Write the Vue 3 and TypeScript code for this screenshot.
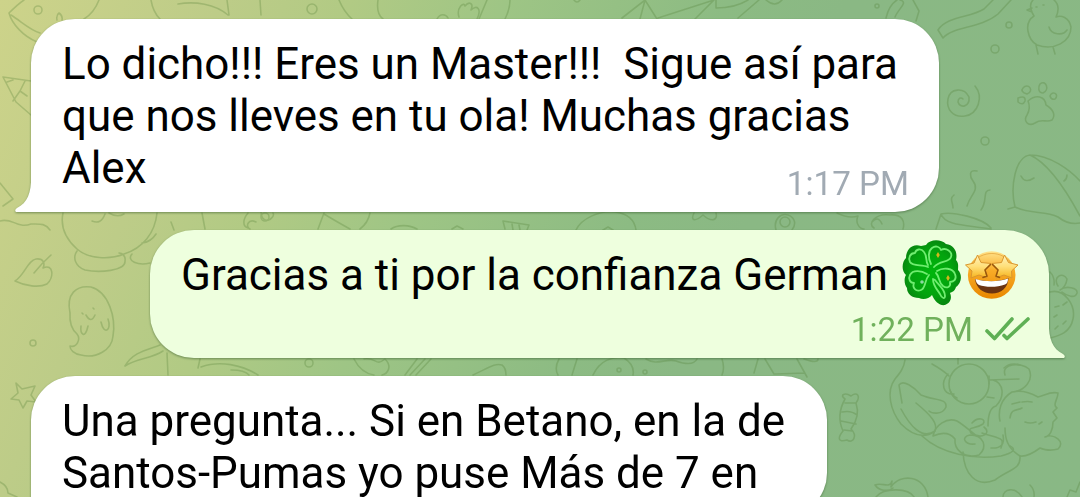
<template>
  <main class="chat">
    <svg class="chat-pattern" viewBox="0 0 1080 497" aria-hidden="true">
      <path v-for="(d, i) in doodles" :key="i" :d="d" />
      <circle v-for="([cx, cy, r], i) in dots" :key="`dot-${i}`" :cx="cx" :cy="cy" :r="r" />
    </svg>

    <article
      v-for="message in messages"
      :key="message.id"
      class="bubble"
      :class="[message.own ? 'bubble-out' : 'bubble-in', { 'bubble-stacked': message.own }]"
      :style="{ width: `${message.width}px` }"
    >
      <div class="bubble-text">
        <div v-for="line in message.lines" :key="line" class="bubble-line">
          <span>{{ line }}</span>
          <template v-if="message.own">
            <svg class="emoji-clover" viewBox="0 0 60 66" aria-hidden="true">
              <defs>
                <radialGradient id="clover">
                  <stop offset="0" stop-color="#00b60c" />
                  <stop offset=".7" stop-color="#03a30e" />
                  <stop offset="1" stop-color="#078a10" />
                </radialGradient>
              </defs>
              <path
                fill="url(#clover)"
                d="M24 5C28-1 39-1 44 4C52 5 56 12 54 20C57 23 56 27 56 30C61 35 59 44 54 47C53 51 50 52 48 53C50 57 49 63 43 65C38 66 33 62 30 55C27 59 21 60 17 58C10 58 5 54 5 48C2 44 2 38 4 35C-1 30 0 22 4 18C4 9 11 3 19 6Z"
              />
              <path
                class="clover-line"
                d="M26 25C23 21 26 17 22 12C19 8 14 9 13 13C8 13 6 18 8 22C11 27 20 24 26 27M29 24C26 18 26 11 30 8C34 5 38 7 39 10C44 7 51 12 49 17C47 23 38 20 32 27M25 34C20 31 11 29 8 35C6 39 8 43 12 43C10 48 14 52 19 50C24 48 22 41 27 35M35 31C41 27 51 28 53 34C55 39 52 42 48 42C49 47 45 49 41 46C36 42 38 37 34 33M31 39C31 46 35 49 38 54C40 59 43 59 43 56C43 49 38 47 33 40Z"
              />
              <path fill="#d5b51b" d="M36 12l1.800 3L36 18l-1.800-3ZM46 35l1.800 3L46 41l-1.800-3Z" />
              <circle cx="20" cy="42" r="1.8" fill="#8bd9a0" />
            </svg>
            <svg class="emoji-star" viewBox="0 0 54 50" aria-hidden="true">
              <defs>
                <linearGradient id="face" x1="0" y1="0" x2="0" y2="1">
                  <stop offset="0" stop-color="#ffe38c" />
                  <stop offset=".4" stop-color="#f9ac27" />
                  <stop offset="1" stop-color="#e88700" />
                </linearGradient>
                <linearGradient id="eye" x1="0" y1="0" x2="0" y2="1">
                  <stop offset="0" stop-color="#fff3bd" />
                  <stop offset=".5" stop-color="#ffdf79" />
                  <stop offset="1" stop-color="#f7b41e" />
                </linearGradient>
              </defs>
              <circle cx="26.700" cy="25" r="23.800" fill="url(#face)" />
              <path fill="none" stroke="#d58a1b" d="M6 14C17 0 37 0 47 14" opacity=".5" />
              <path
                class="eye-star"
                d="M12.500 5L16 12.500L26 13.500L20 20L22 28L14 25L6 28L7 21L0.500 15L9 13Z"
              />
              <path
                class="eye-star"
                d="M39.500 5L43.500 12.500L53 15L46.500 21L47 28L39 25L31 28L33 20L27 13.500L36.500 12.500Z"
              />
              <path fill="none" stroke="#99570c" stroke-width="1.500" stroke-linecap="round" d="M18 27.500L22 26L20 20L25.500 14.500M34.500 27.500L31 26L33 20L27.500 14.500" />
              <path fill="#6b3412" d="M10 29C20 32 34 32 43.500 28C43 38 36 43.500 27 43.500C18 43.500 11 38 10 29Z" />
              <path fill="#fff" d="M10.500 29C20 32 34 32 43 28.500C43 32 42 33.500 40 34.500C32 37.500 21 37.500 14 35C12 34 11 32 10.500 29Z" />
            </svg>
          </template>
        </div>
      </div>

      <div v-if="message.time" class="bubble-meta">
        <time>{{ message.time }}</time>
        <svg v-if="message.own" class="ticks" viewBox="0 0 46 26" aria-hidden="true">
          <path d="M3 15L10.500 22.500L28 3M20 19.500L23 22.500L44 3" />
        </svg>
      </div>

      <svg v-if="message.hasTail" class="tail" viewBox="0 0 46 42" aria-hidden="true">
        <path d="M16 0C17 20 14 32 2 38Q-1 40 1 42H46V0Z" />
      </svg>
    </article>
  </main>
</template>

<script setup lang="ts">
interface Message {
  id: number
  own: boolean
  width: number
  hasTail: boolean
  time?: string
  lines: string[]
}

const messages: Message[] = [
  {
    id: 1,
    own: false,
    width: 908,
    hasTail: true,
    time: '1:17 PM',
    lines: [
      'Lo dicho!!! Eres un Master!!!  Sigue así para',
      'que nos lleves en tu ola! Muchas gracias',
      'Alex'
    ]
  },
  {
    id: 2,
    own: true,
    width: 899,
    hasTail: true,
    time: '1:22 PM',
    lines: ['Gracias a ti por la confianza German']
  },
  {
    id: 3,
    own: false,
    width: 796,
    hasTail: false,
    lines: [
      'Una pregunta... Si en Betano, en la de',
      'Santos-Pumas yo puse Más de 7 en'
    ]
  }
]

// Outline drawings of the wallpaper
const doodles: string[] = [
  // fish and pencil
  'M24 0C18 4 13 9 9 13C12 24 23 36 37 42M11 15C22 22 30 30 40 33M99 0Q94 13 84 19M57 20Q56 15 59 13Q63 16 62 20',
  'M3 77L16 102L31 115M3 77L31 81M7 82L13 80M13 101L20 91L27 96M20 91L25 81M0 183L13 199L3 206',
  // top edge
  'M151 0Q153 12 160 19M178 4C195 1 215 4 228 15M227 0L229 15M260 0L261 15M339 0Q344 12 352 19M378 0Q376 14 383 19',
  'M437 19C440 13 446 14 448 18M459 17C456 8 464 1 465 6C469 1 474 3 471 10C477 4 482 9 477 19M479 19L487 0M510 0Q510 9 505 19M574 0Q577 4 580 0M622 18L645 0L640 19M645 0L657 19M658 18L714 0L695 19M716 0L716 8Q735 8 748 0M759 0L738 18M766 0Q775 8 782 0',
  'M886 18Q889 5 897 0M895 17C898 9 909 2 900 0M913 0L919 11L916 21M938 30L943 38C953 26 980 29 998 14L1011 0M938 30C947 16 970 18 984 9L993 0',
  // chick
  'M1033 0C1028 5 1032 13 1034 16C1023 23 1028 40 1037 45C1054 51 1071 42 1071 27C1069 17 1061 15 1056 17Q1061 6 1054 0M1032 8L1027 10L1032 12M1049 27C1051 35 1063 36 1067 30M1036 45L1038 54M1053 47L1055 54M1036 7L1037 7M1043 5L1044 5',
  // spiral and paw
  'M975 86C984 97 978 114 965 116C953 118 946 109 948 99C950 88 964 87 969 97C970 107 960 109 958 102C958 98 961 97 963 99',
  'M1028 101C1036 94 1045 96 1046 105C1053 109 1056 115 1052 120C1046 123 1042 118 1035 123C1028 127 1023 121 1027 115Q1031 108 1028 101Z',
  'M1023 88C1028 82 1035 91 1027 94C1022 93 1021 90 1023 88ZM1040 84C1046 79 1050 90 1043 93C1038 93 1038 87 1040 84ZM1050 96C1052 90 1060 94 1055 99Q1051 100 1050 96ZM1018 98Q1026 95 1025 101Q1023 106 1018 102Z',
  // sleeping cap
  'M1008 209L1015 207C1010 187 1015 157 1030 155C1050 155 1070 170 1080 181M1030 155C1048 163 1066 190 1080 216M1021 176Q1025 184 1034 178M1064 181Q1067 179 1067 175M1015 207C1031 215 1045 210 1058 217C1067 224 1075 224 1080 223',
  // hot cup
  'M977 171C968 169 970 177 973 181C980 190 970 195 967 206M954 195C949 199 953 202 953 208M990 190C982 190 988 201 981 210M936 229L941 214C952 211 983 218 991 228M941 214C945 226 968 225 991 229M941 214L936 229',
  // gap between the first and second bubbles
  'M0 221C12 217 17 229 31 224C40 224 45 223 50 230M63 213C60 227 66 239 77 249C88 259 110 260 124 254C143 248 155 233 157 213M92 221Q101 225 105 214M109 213Q117 218 124 214M142 243Q151 242 156 234M171 222L174 230M202 213L205 229M77 251C72 258 76 267 85 270C99 273 126 271 125 261C126 256 122 253 119 253M132 254C126 261 138 266 150 263',
  'M248 213C243 219 242 226 248 228M256 222C248 218 245 227 250 229M261 212C262 227 276 218 273 213M324 213L318 229M324 214Q339 223 350 229M370 213Q368 223 360 229M391 229C398 224 410 225 417 229M452 229L457 226L463 229M503 221L529 225L527 230M503 221L505 229M512 224L513 230M519 225L520 230M576 230C581 219 599 210 615 212C631 214 635 223 636 230M603 230L608 227L613 230',
  'M694 213C690 221 695 222 703 215C712 223 718 220 716 213M776 230C773 219 781 213 788 215C796 218 796 225 792 230M837 213Q849 219 858 216C855 222 859 229 864 229M874 228C867 224 875 213 890 215C903 214 905 222 903 229M872 222Q878 215 882 224',
  // leaf and ghost
  'M15 281C24 276 28 260 36 259C44 258 45 264 43 268C54 263 54 278 47 284C39 288 25 286 15 281ZM34 273Q42 263 51 255',
  'M70 313C66 294 76 285 91 287C109 292 116 318 113 336C112 350 96 359 81 355C74 354 70 350 70 346C77 348 81 339 77 334Q69 327 70 313Z',
  'M81 326C80 334 85 340 88 326M101 322C104 336 112 330 108 319M86 315Q91 324 95 315M82 313L83 314M93 308L94 309',
  // star and the left edge
  'M16 383L22 389L35 386L31 395L36 402L27 401L23 408L19 400L11 399L18 393ZM0 482Q8 486 8 493L17 497',
  // gap between the second and third bubbles
  'M125 366C133 352 147 350 160 345M125 366C137 358 151 359 163 351M167 353L168 375M200 359L198 368M201 367C220 360 242 365 258 375M231 370Q245 370 249 375M354 359Q361 373 374 375M364 359C377 357 375 367 385 359C393 367 387 374 382 375M405 375L417 359M410 375L425 359M416 375L431 359M473 375C490 367 495 363 502 365Q506 368 506 375M559 359Q554 368 558 375M577 359L572 375M593 375C600 360 613 356 624 358Q635 365 633 375M646 359C657 366 666 358 676 361Q693 367 697 359M722 359Q725 368 722 375M758 359L754 373M765 359L774 374M775 374L805 373M797 359L807 377M804 359Q818 364 818 359',
  // candy
  'M845 399C839 395 845 392 851 396C857 391 861 396 856 403C859 412 857 421 851 429C858 436 853 444 847 440C837 443 838 437 843 431C838 420 840 408 845 399ZM845 403L855 403M842 412Q851 410 857 415M841 421L856 424M844 430L852 431',
  // big cats
  'M905 360C904 368 900 373 895 379C886 391 890 410 901 424C913 436 924 439 935 431C938 424 932 416 916 403M935 431C922 440 910 426 901 409M902 403L899 385C903 379 914 387 921 395C935 401 947 398 946 407C942 416 931 413 929 411M932 364C941 369 945 372 949 376M958 358L958 364M948 374C940 383 943 395 954 394M950 390Q952 396 957 398',
  'M933 436C935 425 947 417 957 421C967 427 974 435 980 438M933 436C944 431 951 434 955 439M922 436C941 454 974 460 1001 456Q1020 451 1010 446M955 439C954 449 963 459 979 455C988 447 984 435 970 435C960 437 965 445 975 444M972 423C978 416 987 419 983 424C974 430 967 426 971 433C982 440 992 433 984 427M982 433C1000 439 1005 437 1001 448M991 448Q1006 449 1003 435',
  'M989 380L1019 379M989 376L989 384M1005 375C1001 363 1021 362 1029 369C1034 380 1025 391 1012 392C1000 399 998 412 1000 421M1005 428C1005 438 1007 448 1020 456M993 380C1004 383 1005 397 996 406Q988 408 988 426M1012 392C1021 390 1031 393 1038 397C1044 396 1050 391 1058 393C1058 399 1052 405 1057 408L1053 412L1057 418L1053 422C1053 430 1050 436 1045 437C1054 433 1066 442 1058 449C1048 452 1040 448 1040 448Q1028 457 1020 456',
  'M1010 418C1011 408 1017 411 1022 408M1012 404L1020 402M1022 402Q1028 401 1032 402M1025 422Q1030 424 1036 422M1039 424L1042 422M987 397L994 398M963 452C964 474 976 488 995 480C1009 469 1021 470 1020 456',
  // bottom right
  'M875 485C882 482 890 489 892 481M875 485C879 491 888 492 893 488M892 481L891 487C900 473 925 475 928 497M876 497C884 487 909 488 914 497M1003 497C1003 489 1015 486 1022 497M1030 485Q1035 490 1034 497M1067 497L1070 490L1076 492L1080 482',
  // strawberry behind the second bubble
  'M1050 292C1064 288 1076 305 1073 319C1070 334 1057 336 1050 338M1050 272Q1055 277 1054 285M1058 286C1052 277 1063 271 1067 279Q1066 287 1060 290C1066 285 1078 288 1077 293C1075 299 1067 296 1062 292M1063 305L1067 302M1055 307L1059 306M1054 317L1057 315M1063 324L1066 321M1055 329L1058 326M1004 368Q1010 362 1020 365'
]

const dots: [number, number, number][] = [
  [38, 10, 4],
  [312, 9, 5],
  [877, 6, 2],
  [1009, 25, 3],
  [995, 49, 4],
  [985, 141, 4],
  [785, 222, 5],
  [265, 217, 4],
  [33, 343, 3],
  [309, 363, 4],
  [619, 370, 2],
  [645, 372, 2],
  [969, 384, 20]
]
</script>

<style>
body {
  margin: 0;
}
</style>

<style scoped>
.chat {
  position: relative;
  display: flex;
  flex-direction: column;
  gap: 18px;
  box-sizing: border-box;
  width: 1080px;
  height: 497px;
  padding: 19px 31px 0;
  overflow: hidden;
  background: linear-gradient(114deg, #cdd38a 0%, #bdcc88 17%, #b1ca84 27%, #9ec585 39%, #8cbb83 56%, #8ab884 65%, #89b885 100%);
  color: #000;
  font-family: Roboto, "Liberation Sans", sans-serif;
}
.chat-pattern {
  position: absolute;
  inset: 0;
  width: 1080px;
  height: 497px;
  fill: none;
  stroke: #4f7c32;
  stroke-width: 1.6;
  stroke-linecap: round;
  stroke-linejoin: round;
  opacity: 0.27;
}
.bubble {
  position: relative;
  display: grid;
  flex: none;
  box-sizing: border-box;
  padding: 19px 30px 12px 31px;
  border-radius: 44px;
  filter: drop-shadow(0 1px 1px rgba(50, 85, 40, 0.55));
}
.bubble-in {
  align-self: flex-start;
  border-bottom-left-radius: 0;
  background: #fff;
}
.bubble-out {
  align-self: flex-end;
  padding-right: 19px;
  border-bottom-right-radius: 0;
  background: #eeffde;
}
.bubble-text,
.bubble-meta {
  grid-area: 1 / 1;
}
.bubble-text {
  padding-bottom: 6px;
  font-size: 43.95px;
  line-height: 52px;
}
.bubble-line {
  display: flex;
  align-items: center;
  height: 52px;
  white-space: pre;
}
.bubble-meta {
  z-index: 1;
  display: flex;
  align-self: end;
  justify-self: end;
  gap: 11px;
  color: #a1aab3;
  font-size: 33.2px;
  line-height: 32px;
}
.bubble-stacked {
  row-gap: 13px;
}
.bubble-stacked .bubble-text {
  padding-bottom: 0;
}
.bubble-stacked .bubble-meta {
  grid-area: 2 / 1;
  color: #70b15c;
}
.ticks {
  flex: none;
  width: 46px;
  height: 26px;
  margin-top: 2px;
  fill: none;
  stroke: #5fb055;
  stroke-width: 3.6;
  stroke-linecap: round;
  stroke-linejoin: round;
}
.tail {
  position: absolute;
  bottom: 0;
  left: -16px;
  width: 46px;
  height: 42px;
  fill: #fff;
}
.bubble-out .tail {
  right: -16px;
  left: auto;
  fill: #eeffde;
  transform: scaleX(-1);
}
.emoji-clover {
  flex: none;
  width: 60px;
  height: 66px;
  margin: -8px 0 -4px 14px;
}
.emoji-star {
  flex: none;
  width: 54px;
  height: 50px;
  margin-left: 3px;
}
.clover-line {
  fill: none;
  stroke: #70ed70;
  stroke-width: 1.8;
  stroke-linecap: round;
  stroke-linejoin: round;
}
.eye-star {
  fill: url(#eye);
  stroke: #d9972e;
  stroke-width: 1;
  stroke-linejoin: round;
}
</style>
